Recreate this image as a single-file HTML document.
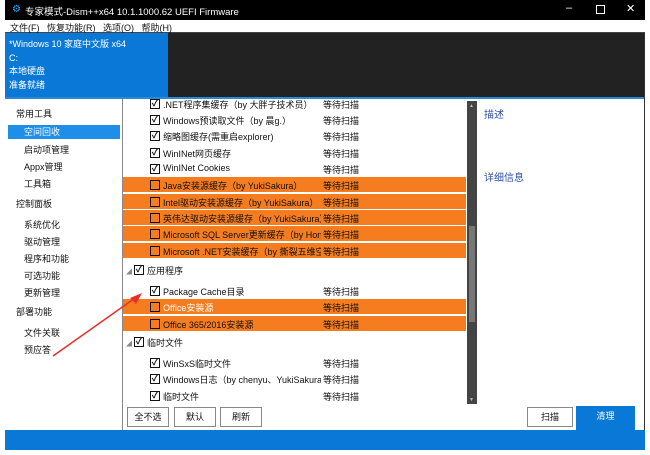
<!DOCTYPE html><html><head><meta charset="utf-8"><style>
*{margin:0;padding:0;box-sizing:border-box}
body{width:650px;height:455px;background:#fff;font-family:"Liberation Sans","Noto Sans CJK SC",sans-serif;font-size:9px;position:relative;overflow:hidden;color:#111}
.a{position:absolute;white-space:nowrap}
.t{overflow:hidden;width:158px}
.cb{position:absolute;width:10px;height:10px;border:1.5px solid #111;background:#fff;font-size:9px;line-height:7px;text-align:center;font-weight:bold}
.row{position:absolute;left:123px;width:343px;height:15px}
.or{background:#f57d20}
.btn{position:absolute;border:1px solid #888;background:#fff;text-align:center;line-height:18px;height:20px}
</style></head><body>
<div class="a" style="left:5px;top:0;width:640px;height:20px;background:#000"></div>
<div class="a" style="left:12px;top:4px;color:#2aa0f0;font-size:10px">⚙</div>
<div class="a" style="left:25px;top:4px;color:#fff;font-size:9.5px">专家模式-Dism++x64 10.1.1000.62 UEFI Firmware</div>
<div class="a" style="left:566px;top:2px;color:#fff;font-size:11px">–</div>
<div class="a" style="left:596px;top:5px;width:9px;height:9px;border:1px solid #fff"></div>
<div class="a" style="left:626px;top:2px;color:#fff;font-size:11px">✕</div>
<div class="a" style="left:5px;top:20px;width:640px;height:13px;border-bottom:1px solid #444"></div>
<div class="a" style="left:10px;top:21px">文件(F)&nbsp;&nbsp;&nbsp;恢复功能(R)&nbsp;&nbsp;&nbsp;选项(O)&nbsp;&nbsp;&nbsp;帮助(H)</div>
<div class="a" style="left:5px;top:33px;width:640px;height:64px;background:#222"></div>
<div class="a" style="left:5px;top:33px;width:163px;height:64px;background:#0a78d7"></div>
<div class="a" style="left:9px;top:38px;color:#fff;line-height:13.5px">*Windows 10 家庭中文版 x64<br>C:<br>本地硬盘<br>准备就绪</div>
<div class="a" style="left:5px;top:97px;width:640px;height:2px;background:#2a8ad8"></div>
<div class="a" style="left:5px;top:99px;width:118px;height:333px;border-right:1px solid #888"></div>
<div class="a" style="left:8px;top:125px;width:112px;height:14px;background:#1e8ee8"></div>
<div class="a" style="left:16px;top:106px;line-height:17px">常用工具</div>
<div class="a" style="left:24px;top:125px;color:#fff">空间回收</div>
<div class="a" style="left:24px;top:142px;line-height:17px">启动项管理<br>Appx管理<br>工具箱</div>
<div class="a" style="left:16px;top:197px">控制面板</div>
<div class="a" style="left:24px;top:217px;line-height:17px">系统优化<br>驱动管理<br>程序和功能<br>可选功能<br>更新管理</div>
<div class="a" style="left:16px;top:305px">部署功能</div>
<div class="a" style="left:24px;top:325px;line-height:17px">文件关联<br>预应答</div>

<div class="row" style="top:96px"><div class="cb" style="left:27px;top:3px">✓</div><span class="a t" style="left:40px;top:2px">.NET程序集缓存（by 大胖子技术员）</span><span class="a" style="left:200px;top:2px">等待扫描</span></div>
<div class="row" style="top:112px"><div class="cb" style="left:27px;top:3px">✓</div><span class="a t" style="left:40px;top:2px">Windows预读取文件（by 晨g.）</span><span class="a" style="left:200px;top:2px">等待扫描</span></div>
<div class="row" style="top:128px"><div class="cb" style="left:27px;top:3px">✓</div><span class="a t" style="left:40px;top:2px">缩略图缓存(需重启explorer)</span><span class="a" style="left:200px;top:2px">等待扫描</span></div>
<div class="row" style="top:145px"><div class="cb" style="left:27px;top:3px">✓</div><span class="a t" style="left:40px;top:2px">WinINet网页缓存</span><span class="a" style="left:200px;top:2px">等待扫描</span></div>
<div class="row" style="top:161px"><div class="cb" style="left:27px;top:3px">✓</div><span class="a t" style="left:40px;top:2px">WinINet Cookies</span><span class="a" style="left:200px;top:2px">等待扫描</span></div>
<div class="row or" style="top:177px"><div class="cb or" style="left:27px;top:3px"></div><span class="a t" style="left:40px;top:2px">Java安装源缓存（by YukiSakura）</span><span class="a" style="left:200px;top:2px">等待扫描</span></div>
<div class="row or" style="top:194px"><div class="cb or" style="left:27px;top:3px"></div><span class="a t" style="left:40px;top:2px">Intel驱动安装源缓存（by YukiSakura）</span><span class="a" style="left:200px;top:2px">等待扫描</span></div>
<div class="row or" style="top:210px"><div class="cb or" style="left:27px;top:3px"></div><span class="a t" style="left:40px;top:2px">英伟达驱动安装源缓存（by YukiSakura）</span><span class="a" style="left:200px;top:2px">等待扫描</span></div>
<div class="row or" style="top:226px"><div class="cb or" style="left:27px;top:3px"></div><span class="a t" style="left:40px;top:2px">Microsoft SQL Server更新缓存（by Honry、</span><span class="a" style="left:200px;top:2px">等待扫描</span></div>
<div class="row or" style="top:243px"><div class="cb or" style="left:27px;top:3px"></div><span class="a t" style="left:40px;top:2px">Microsoft .NET安装缓存（by 撕裂五维空间）</span><span class="a" style="left:200px;top:2px">等待扫描</span></div>
<div class="a" style="left:126px;top:267px;color:#888;font-size:6px">◢</div>
<div class="cb" style="left:134px;top:265px">✓</div><div class="a" style="left:147px;top:264px">应用程序</div>
<div class="row" style="top:283px"><div class="cb" style="left:27px;top:3px">✓</div><span class="a t" style="left:40px;top:2px">Package Cache目录</span><span class="a" style="left:200px;top:2px">等待扫描</span></div>
<div class="row or" style="top:299px"><div class="cb or" style="left:27px;top:3px"></div><span class="a t" style="left:40px;top:2px;color:#fff">Office安装源</span><span class="a" style="left:200px;top:2px">等待扫描</span></div>
<div class="row or" style="top:316px"><div class="cb or" style="left:27px;top:3px"></div><span class="a t" style="left:40px;top:2px">Office 365/2016安装源</span><span class="a" style="left:200px;top:2px">等待扫描</span></div>
<div class="a" style="left:126px;top:339px;color:#888;font-size:6px">◢</div>
<div class="cb" style="left:134px;top:337px">✓</div><div class="a" style="left:147px;top:336px">临时文件</div>
<div class="row" style="top:355px"><div class="cb" style="left:27px;top:3px">✓</div><span class="a t" style="left:40px;top:2px">WinSxS临时文件</span><span class="a" style="left:200px;top:2px">等待扫描</span></div>
<div class="row" style="top:371px"><div class="cb" style="left:27px;top:3px">✓</div><span class="a t" style="left:40px;top:2px">Windows日志（by chenyu、YukiSakura）</span><span class="a" style="left:200px;top:2px">等待扫描</span></div>
<div class="row" style="top:388px"><div class="cb" style="left:27px;top:3px">✓</div><span class="a t" style="left:40px;top:2px">临时文件</span><span class="a" style="left:200px;top:2px">等待扫描</span></div>

<div class="a" style="left:467px;top:101px;width:10px;height:303px;background:#444"></div>
<div class="a" style="left:469px;top:226px;width:6px;height:96px;background:#777"></div>
<div class="a" style="left:469px;top:103px;color:#bbb;font-size:5px">▲</div>
<div class="a" style="left:469px;top:397px;color:#bbb;font-size:5px">▼</div>
<div class="a" style="left:484px;top:106px;color:#2d4fa8;font-size:10px">描述</div>
<div class="a" style="left:484px;top:169px;color:#2d4fa8;font-size:10px">详细信息</div>
<div class="a" style="left:644px;top:33px;width:1px;height:400px;background:#333"></div>

<div class="btn" style="left:127px;top:407px;width:42px">全不选</div>
<div class="btn" style="left:174px;top:407px;width:42px">默认</div>
<div class="btn" style="left:220px;top:407px;width:42px">刷新</div>
<div class="btn" style="left:527px;top:407px;width:46px">扫描</div>
<div class="a" style="left:576px;top:406px;width:59px;height:26px;background:#0a78d7;color:#fff;text-align:center;line-height:20px">清理</div>
<div class="a" style="left:5px;top:430px;width:640px;height:20px;background:#0a78d7"></div>
<svg class="a" style="left:50px;top:290px" width="100" height="70"><line x1="3" y1="66" x2="88" y2="6" stroke="#e8302a" stroke-width="1.5"/><polygon points="92,3 80,8 86,14" fill="#e8302a"/></svg>
</body></html>
